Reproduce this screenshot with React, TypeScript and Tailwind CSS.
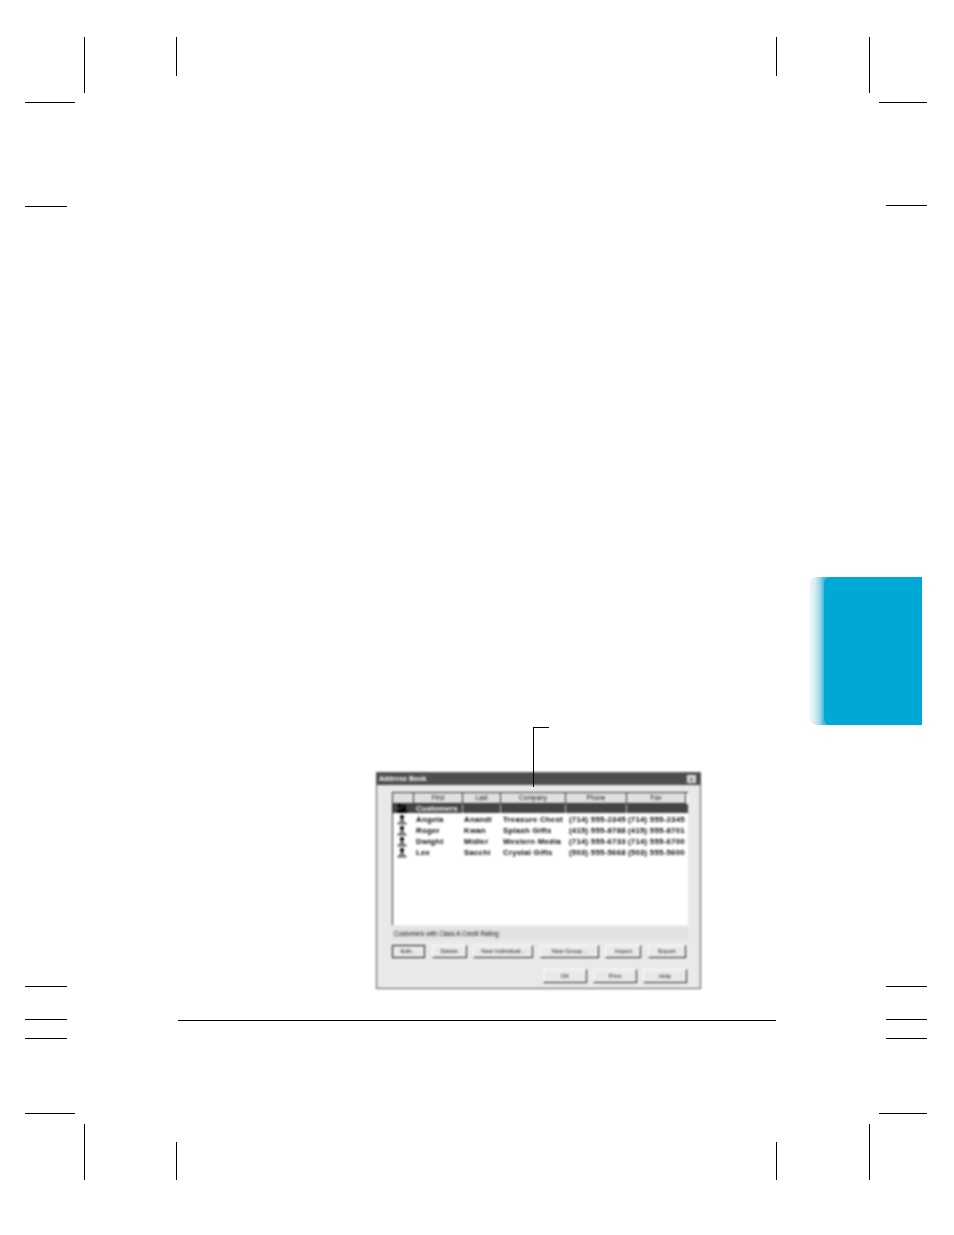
import { X } from 'lucide-react';

const contacts = [
  { first: 'Angela', last: 'Anandi', company: 'Treasure Chest', phone: '(714) 555-2345', fax: '(714) 555-2345' },
  { first: 'Roger', last: 'Kwan', company: 'Splash Gifts', phone: '(415) 555-8788', fax: '(415) 555-8701' },
  { first: 'Dwight', last: 'Midler', company: 'Western Media', phone: '(714) 555-6733', fax: '(714) 555-6700' },
  { first: 'Lee', last: 'Sacchi', company: 'Crystal Gifts', phone: '(503) 555-5668', fax: '(503) 555-5600' },
];

const columns = 'grid grid-cols-[21px_49px_38px_65px_61px_59px]';

function CropMarks() {
  return (
    <>
      {/* top */}
      <div className="absolute left-[84px] top-[37px] h-[56px] w-px bg-black" />
      <div className="absolute left-[176px] top-[37px] h-[39px] w-px bg-black" />
      <div className="absolute left-[776px] top-[37px] h-[39px] w-px bg-black" />
      <div className="absolute left-[869px] top-[37px] h-[56px] w-px bg-black" />
      <div className="absolute left-[25px] top-[102px] h-px w-[50px] bg-black" />
      <div className="absolute left-[25px] top-[206px] h-px w-[42px] bg-black" />
      <div className="absolute left-[879px] top-[102px] h-px w-[48px] bg-black" />
      <div className="absolute left-[886px] top-[205px] h-px w-[41px] bg-black" />

      {/* bottom */}
      <div className="absolute left-[25px] top-[986px] h-px w-[42px] bg-black" />
      <div className="absolute left-[25px] top-[1019px] h-px w-[42px] bg-black" />
      <div className="absolute left-[25px] top-[1038px] h-px w-[42px] bg-black" />
      <div className="absolute left-[25px] top-[1113px] h-px w-[50px] bg-black" />
      <div className="absolute left-[886px] top-[986px] h-px w-[41px] bg-black" />
      <div className="absolute left-[886px] top-[1019px] h-px w-[41px] bg-black" />
      <div className="absolute left-[886px] top-[1038px] h-px w-[41px] bg-black" />
      <div className="absolute left-[879px] top-[1113px] h-px w-[48px] bg-black" />
      <div className="absolute left-[84px] top-[1124px] h-[56px] w-px bg-black" />
      <div className="absolute left-[176px] top-[1142px] h-[38px] w-px bg-black" />
      <div className="absolute left-[776px] top-[1142px] h-[38px] w-px bg-black" />
      <div className="absolute left-[869px] top-[1124px] h-[56px] w-px bg-black" />

      {/* footer rule */}
      <div className="absolute left-[178px] top-[1020px] h-px w-[598px] bg-black" />
    </>
  );
}

function PersonIcon() {
  return (
    <svg width="10" height="10" viewBox="0 0 10 10" className="ml-[4px]">
      <ellipse cx="5" cy="2" rx="2.2" ry="2" fill="#000" />
      <path d="M3.8 4h2.4v2.5H3.8z" fill="#555" />
      <path d="M2 6h6v1H2z" fill="#333" />
      <path d="M.5 8h9v1.2h-9z" fill="#000" />
    </svg>
  );
}

function GroupIcon() {
  return (
    <svg width="12" height="9" viewBox="0 0 12 9" className="ml-[3px]">
      <circle cx="3.5" cy="2" r="2" fill="#000" />
      <circle cx="8" cy="3" r="2" fill="#000" />
      <path d="M1 8c0-2 1-3 3-3h4c2 0 3 1 3 3v1H1z" fill="#000" />
    </svg>
  );
}

function DialogButton({ label, width, isDefault }: { label: string; width: string; isDefault?: boolean }) {
  return (
    <div
      className={`flex items-center justify-center border text-[6px] text-[#111] ${width} ${
        isDefault ? 'border-[#111]' : 'border-t-white border-l-white border-r-[#222] border-b-[#222]'
      }`}
    >
      {label}
    </div>
  );
}

function AddressBook() {
  return (
    <div className="absolute left-[376px] top-[772px] flex h-[217px] w-[325px] flex-col border border-[#555] bg-[#e9e9e9] blur-[0.8px]">
      {/* Title bar */}
      <div className="flex h-[12px] items-center justify-between bg-[#4d4d4d] pl-[2px] pr-[4px]">
        <span className="text-[7px] font-bold text-white">Address Book</span>
        <span className="flex h-[8px] w-[9px] items-center justify-center bg-[#e0e0e0]">
          <X size={7} strokeWidth={3} className="text-[#222]" />
        </span>
      </div>

      <div className="flex flex-1 flex-col pl-[15px] pr-[13px] pt-[7px]">
        {/* List */}
        <div className="h-[133px] w-[296px] border-l border-t border-[#333] bg-white">
          <div className={`${columns} h-[11px] w-[293px] bg-[#e0e0e0] text-[6.5px] leading-[10px] text-[#111]`}>
            <div className="border-r border-b border-[#333]" />
            <div className="border-r border-b border-[#333] text-center">First</div>
            <div className="border-r border-b border-[#333] text-center">Last</div>
            <div className="border-r border-b border-[#333] text-center">Company</div>
            <div className="border-r border-b border-[#333] text-center">Phone</div>
            <div className="border-r border-b border-[#333] text-center">Fax</div>
          </div>
          <div className={`${columns} h-[9px] w-[295px] bg-[#444] text-[8px] font-bold leading-[9px] text-white`}>
            <div className="flex items-center">
              <GroupIcon />
            </div>
            <div className="border-r border-[#bbb] pl-[2px]">Customers</div>
            <div className="border-r border-[#bbb]" />
            <div className="border-r border-[#bbb]" />
            <div className="border-r border-[#bbb]" />
            <div />
          </div>
          <div className="pt-[1px]">
            {contacts.map((c) => (
              <div key={c.first} className={`${columns} h-[11px] text-[7.8px] font-bold leading-[11px] tracking-[0.25px] text-black`}>
                <div className="flex items-center">
                  <PersonIcon />
                </div>
                <div className="pl-[2px]">{c.first}</div>
                <div className="pl-[1px]">{c.last}</div>
                <div className="pl-[2px] whitespace-nowrap">{c.company}</div>
                <div className="pl-[3px] whitespace-nowrap">{c.phone}</div>
                <div className="pl-[1px] whitespace-nowrap">{c.fax}</div>
              </div>
            ))}
          </div>
        </div>

        {/* Description */}
        <div className="mt-[2px] flex h-[13px] w-[296px] items-center bg-[#e2e2e2] pl-[2px] text-[6.3px] text-[#111]">
          Customers with Class A Credit Rating
        </div>

        {/* Group actions */}
        <div className="mt-[5px] flex h-[13px] w-[294px] justify-between">
          <DialogButton label="Edit..." width="w-[33px]" isDefault />
          <DialogButton label="Delete" width="w-[35px]" />
          <DialogButton label="New Individual..." width="w-[60px]" />
          <DialogButton label="New Group..." width="w-[59px]" />
          <DialogButton label="Import" width="w-[36px]" />
          <DialogButton label="Export" width="w-[38px]" />
        </div>

        {/* Dialog actions */}
        <div className="mt-[11px] flex h-[14px] w-[295px] justify-end gap-[6px]">
          <DialogButton label="OK" width="w-[44px]" />
          <DialogButton label="Print" width="w-[44px]" />
          <DialogButton label="Help" width="w-[44px]" />
        </div>
      </div>
    </div>
  );
}

export default function App() {
  return (
    <div className="relative h-[1235px] w-[954px] overflow-hidden bg-white font-['Liberation_Sans',Arial,sans-serif]">
      <CropMarks />

      {/* Chapter tab */}
      <div className="absolute left-[809px] top-[577px] h-[148px] w-[113px] rounded-l-[8px] bg-[linear-gradient(90deg,#f2fafc_0px,#d5edf3_6px,#9ed7e6_11px,#3fb8dc_15px)] pl-[15px]">
        <div className="h-full rounded-l-[6px] bg-[#00a8d8]" />
      </div>

      {/* Callout line */}
      <div className="absolute left-[533px] top-[727px] h-px w-[16px] bg-black" />
      <div className="absolute left-[533px] top-[727px] z-10 h-[60px] w-px bg-black" />

      <AddressBook />
    </div>
  );
}
